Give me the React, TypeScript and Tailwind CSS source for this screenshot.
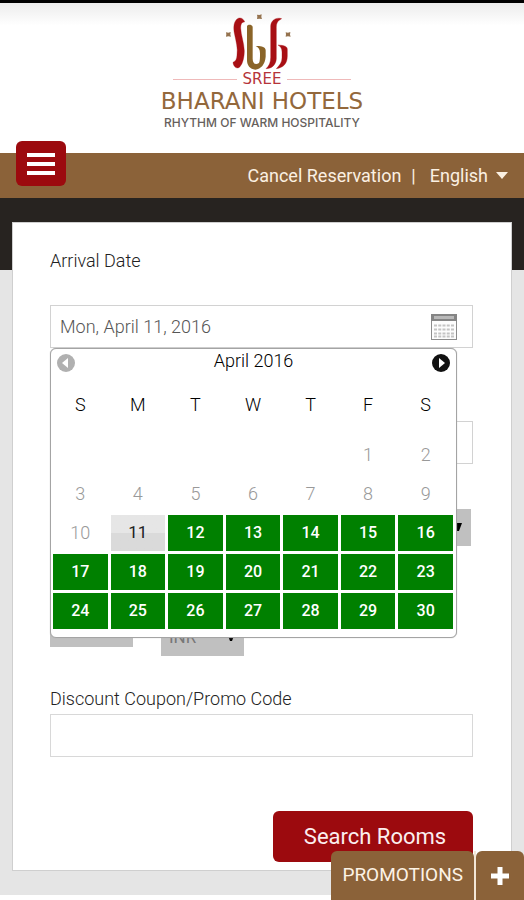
import { useState } from "react";
import type { ReactNode } from "react";

const WEEKDAYS = ["S", "M", "T", "W", "T", "F", "S"];
const DAY_NAMES = ["Sunday", "Monday", "Tuesday", "Wednesday", "Thursday", "Friday", "Saturday"];
const TODAY = 11;
const WEEKS: (number | null)[][] = [
  [null, null, null, null, null, 1, 2],
  [3, 4, 5, 6, 7, 8, 9],
  [10, 11, 12, 13, 14, 15, 16],
  [17, 18, 19, 20, 21, 22, 23],
  [24, 25, 26, 27, 28, 29, 30],
];

function Emblem() {
  return (
    <svg viewBox="216 36 240 174" className="h-[58px] w-20" aria-hidden="true">
      <g fill="#a80f14" stroke="#a80f14">
        <path d="M284 66C281 55 268 49 259 59C250 70 250 86 254 104C258 124 264 145 261 165C260 177 258 183 249 187C250 201 262 209 270 200C279 190 283 170 283 152C282 128 273 106 272 84C272 72 276 65 284 66Z" />
        <path d="M395 56C379 51 363 60 362 78V172C362 188 357 198 348 206C366 206 378 194 379 176V82C379 68 384 61 395 56Z" />
        <path d="M384 135C398 136 412 137 412 148V168C412 190 401 203 379 206C389 196 396 187 396 172V156C396 146 392 140 384 135Z" />
      </g>
      <path
        d="M291 78C294 73 305 73 308 80V176C308 190 316 196 327 189C330 183 330 174 330 160C330 148 326 142 317 138C331 137 347 140 347 151V170C345 193 333 207 316 209C300 208 291 196 291 180Z"
        fill="#8a6428"
      />
      <g fill="#94724e">
        <path d="M321 44l7 1 7-2-1 8 2 6-8-1-7 1 1-7z" />
        <path d="M228 97l7 1 7-2-1 8 2 6-8-1-7 1 1-7z" />
        <path d="M407 97l7 1 7-2-1 8 2 6-8-1-7 1 1-7z" />
      </g>
    </svg>
  );
}

function Logo() {
  return (
    <a href="#home" className="flex flex-col items-center whitespace-nowrap">
      <Emblem />
      <span className="flex items-center gap-1.5 font-['DejaVu_Sans',sans-serif] text-[15px] leading-[18px] text-[#b5343a]">
        <span className="h-px w-16 bg-[#efb9b9]" />
        SREE
        <span className="h-px w-16 bg-[#efb9b9]" />
      </span>
      <span className="font-['DejaVu_Sans',sans-serif] text-[23px] leading-[27px] text-[#93683c]">BHARANI HOTELS</span>
      <span className="font-['Inter',sans-serif] text-xs leading-4 font-medium text-[#66605c]">
        RHYTHM OF WARM HOSPITALITY
      </span>
    </a>
  );
}

function CalendarIcon() {
  return (
    <svg viewBox="0 0 26 26" className="size-[26px]" aria-hidden="true">
      <rect x="0.5" y="0.5" width="25" height="25" fill="#fdfdfd" stroke="#8c8c8c" />
      <rect x="0" y="0" width="26" height="7" fill="#858585" />
      <rect x="3" y="2" width="20" height="3" fill="#b9b9b9" />
      <path
        d="M3 11.5h20M3 15.5h20M3 19.5h20M3 22.5h20"
        stroke="#c4c4c4"
        strokeWidth="2"
        strokeDasharray="3 1.25"
      />
    </svg>
  );
}

function Select({ id, label, options }: { id: string; label: string; options: string[] }) {
  return (
    <div className="relative w-[83px]">
      <select
        id={id}
        aria-label={label}
        className="block h-[37px] w-full appearance-none bg-[#c0c0c0] pl-2 text-[17px] text-[#777]"
      >
        {options.map((option) => (
          <option key={option}>{option}</option>
        ))}
      </select>
      <svg viewBox="0 0 8 8" className="pointer-events-none absolute top-[14px] right-[9px] size-2" aria-hidden="true">
        <path d="M0 0h8L5 8H3z" fill="#000" />
      </svg>
    </div>
  );
}

function Field({ id, label, children }: { id: string; label: string; children: ReactNode }) {
  return (
    <div>
      <label htmlFor={id} className="block text-lg leading-6 font-light text-[#222]">
        {label}
      </label>
      {children}
    </div>
  );
}

function DateBox({ id, value }: { id: string; value: string }) {
  return (
    <div className="mt-8 flex h-[43px] items-center border border-[#d2d2d2] pr-[15px]">
      <input
        id={id}
        defaultValue={value}
        className="min-w-0 flex-1 px-[9px] text-lg font-light text-[#555] outline-none"
      />
      <button type="button" aria-label="Open calendar">
        <CalendarIcon />
      </button>
    </div>
  );
}

function DatePicker() {
  const [selected, setSelected] = useState<number>(TODAY);
  return (
    <div className="absolute top-full right-4 left-0 z-10 rounded-md border border-[#a4a4a4] bg-white pb-[5px] shadow-[0_0_1px_#aaa]">
      <div className="flex h-6 items-end justify-between px-[5px]">
        <button type="button" aria-label="Previous month" disabled>
          <svg viewBox="0 0 20 20" className="block size-5" aria-hidden="true">
            <circle cx="10" cy="10" r="9" fill="#b0b0b0" />
            <path d="M12 5v10L6 10z" fill="#fff" />
          </svg>
        </button>
        <span className="self-center text-lg leading-6 font-light text-black">April 2016</span>
        <button type="button" aria-label="Next month">
          <svg viewBox="0 0 20 20" className="block size-5" aria-hidden="true">
            <circle cx="10" cy="10" r="9" fill="#111" />
            <path d="M8 5v10L14 10z" fill="#fff" />
          </svg>
        </button>
      </div>
      <div className="-ml-px">
        <table className="w-full table-fixed border-separate border-spacing-[3px]">
          <thead>
            <tr>
              {WEEKDAYS.map((day, i) => (
                <th
                  key={DAY_NAMES[i]}
                  scope="col"
                  abbr={DAY_NAMES[i]}
                  className="h-[58px] p-0 text-lg font-light text-black"
                >
                  {day}
                </th>
              ))}
            </tr>
          </thead>
          <tbody>
            {WEEKS.map((week, w) => (
              <tr key={w}>
                {week.map((day, d) => {
                  let tone = "text-lg font-light text-[#999]";
                  if (day === TODAY)
                    tone = "bg-linear-to-b from-[#e6e6e6] from-50% to-[#dadada] to-50% text-[17px] text-[#222]";
                  else if (day !== null && day > TODAY) tone = "bg-[#008000] text-base font-medium text-white";
                  return (
                    <td key={d} className="h-9 p-0">
                      {day !== null && (
                        <button
                          type="button"
                          disabled={day < TODAY}
                          aria-pressed={day === selected}
                          onClick={() => setSelected(day)}
                          className={`block h-9 w-full ${tone}`}
                        >
                          {day}
                        </button>
                      )}
                    </td>
                  );
                })}
              </tr>
            ))}
          </tbody>
        </table>
      </div>
    </div>
  );
}

export default function App() {
  return (
    <div className="min-h-screen bg-white font-['Roboto',sans-serif]">
      <header>
        <div className="h-[3px] bg-black" />
        <div className="flex h-[150px] justify-center bg-linear-to-b from-[#ececec] to-white to-15% pt-[9px]">
          <Logo />
        </div>
        <nav className="flex h-[45px] items-center bg-[#8b6239] px-4 text-lg text-[#fbf0e2]">
          <button
            type="button"
            aria-label="Menu"
            className="-mt-3 flex h-[45px] w-[50px] flex-col items-center justify-center gap-[5px] self-start rounded-md bg-[#9c0a0e]"
          >
            <span className="h-1 w-7 bg-white" />
            <span className="h-1 w-7 bg-white" />
            <span className="h-1 w-7 bg-white" />
          </button>
          <a href="#cancel" className="ml-auto">
            Cancel Reservation
          </a>
          <span className="mr-3.5 ml-2.5">|</span>
          <button type="button" className="flex items-center gap-2">
            English
            <svg viewBox="0 0 12 7" className="h-[7px] w-3" aria-hidden="true">
              <path d="M0 0h12L6 7z" fill="currentColor" />
            </svg>
          </button>
        </nav>
      </header>

      <main className="bg-[#e5e5e5] pb-6">
        <div className="h-[72px] bg-[#272320]" />
        <form
          onSubmit={(event) => event.preventDefault()}
          className="mx-3 -mt-12 border border-[#cfcfcf] bg-white pt-[26px] pr-[38px] pb-2 pl-[37px]"
        >
          <div className="relative">
            <Field id="arrival" label="Arrival Date">
              <DateBox id="arrival" value="Mon, April 11, 2016" />
            </Field>
            <DatePicker />
          </div>
          <div className="mt-[17px]">
            <Field id="departure" label="Departure Date">
              <DateBox id="departure" value="Tue, April 12, 2016" />
            </Field>
          </div>
          <div className="mt-[45px] flex justify-between pr-0.5">
            <Select id="rooms" label="Rooms" options={["1", "2", "3"]} />
            <Select id="adults" label="Adults" options={["1", "2", "3"]} />
            <Select id="children" label="Children" options={["0", "1", "2"]} />
          </div>
          <div className="mt-16 flex items-start gap-7">
            <Select id="nights" label="Nights" options={["1", "2", "3"]} />
            <div className="pt-[9px]">
              <Select id="currency" label="Currency" options={["INR", "USD"]} />
            </div>
          </div>
          <div className="mt-[31px]">
            <Field id="promo" label="Discount Coupon/Promo Code">
              <input
                id="promo"
                className="mt-[3px] block h-[43px] w-full border border-[#d8d8d8] px-[9px] text-lg font-light text-[#555]"
              />
            </Field>
          </div>
          <div className="mt-[54px] flex justify-end">
            <button type="submit" className="h-[51px] w-[200px] rounded-md bg-[#9c0a0e] pl-1 text-[22px] text-[#fbeeee]">
              Search Rooms
            </button>
          </div>
        </form>
      </main>

      <button type="button" className="fixed right-0 bottom-0 z-20 flex h-[49px] items-stretch text-[19px] text-[#fdf3e6]">
        <span className="flex items-center rounded-t-md bg-[#8b6239] px-[11px]">PROMOTIONS</span>
        <span className="w-0.5 bg-[#f3e6d6]" />
        <span className="flex w-12 items-center justify-center rounded-t-md bg-[#8b6239]">
          <svg viewBox="0 0 18 18" className="size-[18px]" aria-hidden="true">
            <path d="M6.5 0h5v6.5H18v5h-6.5V18h-5v-6.5H0v-5h6.5z" fill="#fff" />
          </svg>
        </span>
      </button>
    </div>
  );
}
